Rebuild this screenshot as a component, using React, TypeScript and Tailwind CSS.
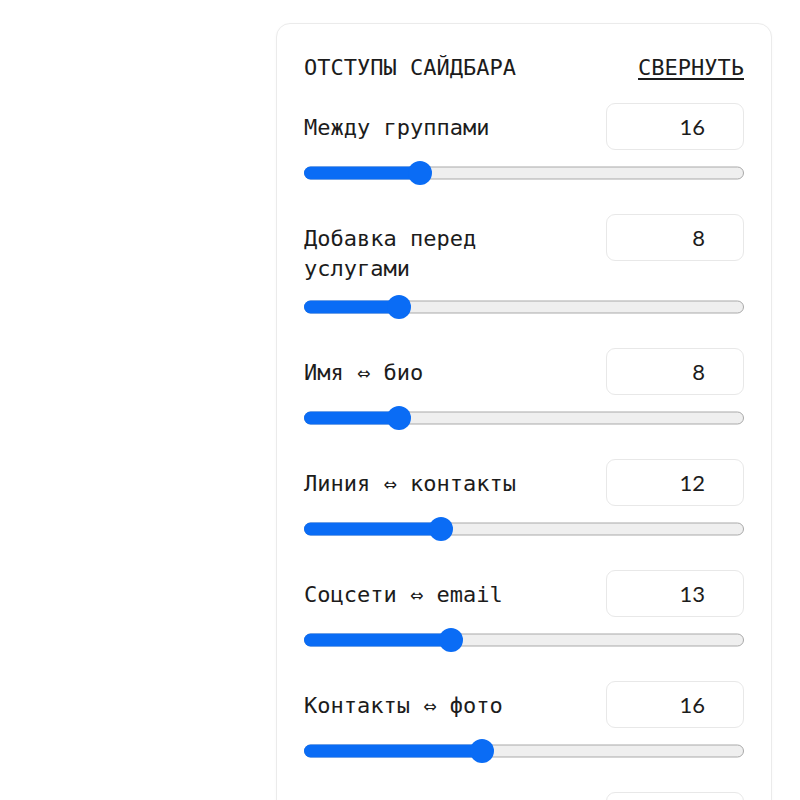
import { useState } from 'react'

type Spacing = {
    id: string
    label: string
    value: number
    max: number
}

const initialSpacings: Spacing[] = [
    { id: 'groups', label: 'Между группами', value: 16, max: 64 },
    { id: 'services', label: 'Добавка перед услугами', value: 8, max: 40 },
    { id: 'name-bio', label: 'Имя ⇔ био', value: 8, max: 40 },
    { id: 'line-contacts', label: 'Линия ⇔ контакты', value: 12, max: 40 },
    { id: 'social-email', label: 'Соцсети ⇔ email', value: 13, max: 40 },
    { id: 'contacts-photo', label: 'Контакты ⇔ фото', value: 16, max: 40 },
    { id: 'photo-bottom', label: 'Фото ⇔ низ', value: 24, max: 40 },
]

const mono = { fontFamily: '"DejaVu Sans Mono", "Liberation Mono", monospace' }

function RangeTrack({ value, max }: { value: number; max: number }) {
    // thumb centre travels between the track ends minus its radius
    const pct = value / max
    const left = `calc(12px + (100% - 24px) * ${pct})`

    return (
        <div className="relative h-6 w-full">
            <div className="absolute inset-x-0 top-1/2 h-[13px] -translate-y-1/2 rounded-full border border-[#a9a9a9] bg-[#efefef]" />
            <div
                className="absolute left-0 top-1/2 h-[13px] -translate-y-1/2 rounded-l-full bg-[#0a6cf5]"
                style={{ width: left }}
            />
            <div
                className="absolute top-0 h-6 w-6 -translate-x-1/2 rounded-full bg-[#0a6cf5]"
                style={{ left }}
            />
        </div>
    )
}

export default function App() {
    const [spacings] = useState(initialSpacings)

    return (
        <div className="flex min-h-screen justify-end bg-white pr-[28px] pt-[23px]">
            <div className="w-[496px] rounded-t-[14px] border border-[#ebebeb] bg-white px-[27px] pt-[32px] pb-10 shadow-[0_1px_3px_rgba(0,0,0,0.03)]">
                {/* Header */}
                <div className="flex items-center justify-between text-[22px] leading-6 text-[#1c1c1c]" style={mono}>
                    <span>ОТСТУПЫ САЙДБАРА</span>
                    <button className="underline underline-offset-[3px]">СВЕРНУТЬ</button>
                </div>

                <div className="mt-[23px] flex flex-col gap-[29px]">
                    {spacings.map(s => (
                        <div key={s.id} className="flex flex-col gap-[11px]">
                            <div className="flex items-start justify-between gap-4">
                                <span
                                    className="max-w-[250px] pt-[10px] text-[22px] leading-[30px] text-[#1c1c1c]"
                                    style={mono}
                                >
                                    {s.label}
                                </span>
                                <div
                                    className="flex h-[47px] w-[138px] shrink-0 items-center justify-end rounded-[9px] border border-[#e8e8e8] bg-white pr-[38px] text-[22px] text-[#1c1c1c]"
                                    style={{ fontFamily: 'Lato, "Open Sans", sans-serif' }}
                                >
                                    {s.value}
                                </div>
                            </div>
                            <RangeTrack value={s.value} max={s.max} />
                        </div>
                    ))}
                </div>
            </div>
        </div>
    )
}
